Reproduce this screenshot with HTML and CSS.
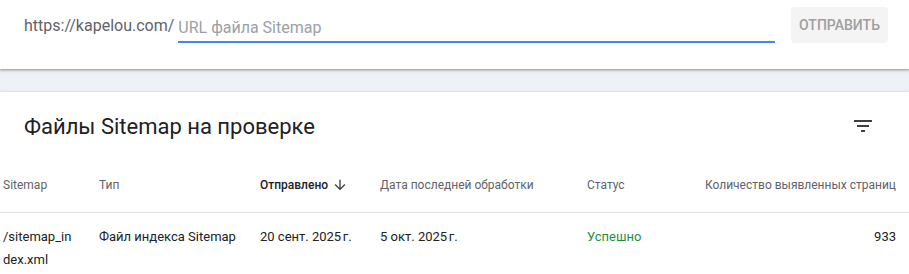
FILE: index.html
```html
<!DOCTYPE html>
<html lang="ru">
<head>
    <meta charset="UTF-8">
    <title>Файлы Sitemap</title>
    <link rel="stylesheet" href="styles.css">
</head>
<body>
    <div class="submit-card">
        <span class="prefix">https://kapelou.com/</span>
        <input type="text" class="url-input" placeholder="URL файла Sitemap">
        <button class="submit-btn" disabled>Отправить</button>
    </div>

    <div class="list-card">
        <div class="list-head">
            <h2>Файлы Sitemap на проверке</h2>
            <svg class="filter-icon" viewBox="0 0 24 24" width="24" height="24">
                <path d="M10 18h4v-2h-4v2zM3 6v2h18V6H3zm3 7h12v-2H6v2z"/>
            </svg>
        </div>

        <div class="table">
            <div class="row head">
                <div>Sitemap</div>
                <div>Тип</div>
                <div class="sorted">Отправлено
                    <svg viewBox="0 0 24 24" width="16" height="16">
                        <path d="M20 12l-1.41-1.41L13 16.17V4h-2v12.17l-5.58-5.59L4 12l8 8 8-8z"/>
                    </svg>
                </div>
                <div>Дата последней обработки</div>
                <div>Статус</div>
                <div class="num">Количество выявленных страниц</div>
            </div>
            <div class="row">
                <div class="path">/sitemap_index.xml</div>
                <div>Файл индекса Sitemap</div>
                <div>20 сент. 2025&#8239;г.</div>
                <div>5 окт. 2025&#8239;г.</div>
                <div class="ok">Успешно</div>
                <div class="num">933</div>
            </div>
        </div>
    </div>
</body>
</html>
```

FILE: styles.css
```css
body {
    margin: 0;
    background: #eef1f5;
    font-family: Roboto, "Noto Sans", sans-serif;
    color: #202124;
}

.submit-card {
    height: 69px;
    background: #fff;
    box-shadow: 0 1px 2px rgba(60,64,67,0.4), 0 1px 3px 1px rgba(60,64,67,0.15);
    display: flex;
    align-items: flex-start;
    padding: 0 21px 0 24px;
    box-sizing: border-box;
}

.prefix {
    font-size: 16px;
    color: #5f6368;
    margin-top: 16px;
    margin-right: 4px;
}

.url-input {
    flex: 1;
    margin-top: 13px;
    height: 28px;
    padding: 0;
    border: none;
    border-bottom: 2px solid #4285f4;
    font-family: inherit;
    font-size: 16px;
    color: #202124;
    outline: none;
}

.url-input::placeholder {
    color: #9aa0a6;
}

.submit-btn {
    margin-left: 16px;
    margin-top: 7px;
    width: 97px;
    height: 36px;
    border: none;
    border-radius: 4px;
    background: #f4f4f4;
    color: #9e9e9e;
    font-family: inherit;
    font-size: 14px;
    font-weight: 500;
    text-transform: uppercase;
    padding: 0;
}

.list-card {
    margin-top: 23px;
    background: #fff;
    box-shadow: 0 -1px 2px rgba(60,64,67,0.1);
    min-height: 182px;
}

.list-head {
    display: flex;
    align-items: center;
    justify-content: space-between;
    padding: 10px 34px 0 24px;
    height: 48px;
}

.list-head h2 {
    margin: 0;
    font-size: 22px;
    font-weight: 400;
}

.filter-icon {
    fill: #3c4043;
}

.table {
    margin-top: 8px;
}

.row {
    display: grid;
    grid-template-columns: 96px 161px 120px 207px 1fr 196px;
    padding: 0 13px 0 3px;
    font-size: 13px;
    line-height: 23px;
}

.row.head {
    font-size: 12px;
    color: #5f6368;
    height: 54px;
    align-items: center;
    border-bottom: 1px solid #e0e0e0;
}

.row:not(.head) {
    padding-top: 12px;
}

.row > div {
    padding-right: 18px;
}

.row .num {
    text-align: right;
    padding-right: 0;
}

.sorted {
    color: #202124;
    font-weight: 500;
    display: flex;
    align-items: center;
    gap: 4px;
}

.sorted svg {
    fill: #3c4043;
}

.row .path {
    word-break: break-all;
    padding-right: 24px;
}

.ok {
    color: #1e8e3e;
}
```
